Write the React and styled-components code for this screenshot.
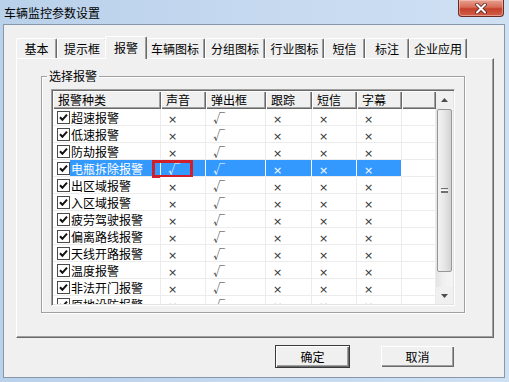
import React from 'react'
import styled, { createGlobalStyle } from 'styled-components'

const GlobalStyle = createGlobalStyle`
  html, body {
    margin: 0;
    padding: 0;
    background: #c2d6ee;
  }
  body {
    font-family: "Noto Sans CJK SC", "Liberation Sans", sans-serif;
    font-size: 12px;
    color: #000;
  }
`

const tabs = [
  { label: '基本', width: 41 },
  { label: '提示框', width: 50 },
  { label: '报警', width: 42, active: true },
  { label: '车辆图标', width: 60 },
  { label: '分组图标', width: 60 },
  { label: '行业图标', width: 59 },
  { label: '短信', width: 41 },
  { label: '标注', width: 44 },
  { label: '企业应用', width: 58 },
]

const columns = [
  { title: '报警种类', width: 108 },
  { title: '声音', width: 45, key: 'sound' },
  { title: '弹出框', width: 60, key: 'popup' },
  { title: '跟踪', width: 46, key: 'track' },
  { title: '短信', width: 45, key: 'sms' },
  { title: '字幕', width: 45, key: 'caption' },
]

const names = [
  '超速报警', '低速报警', '防劫报警', '电瓶拆除报警', '出区域报警', '入区域报警',
  '疲劳驾驶报警', '偏离路线报警', '天线开路报警', '温度报警', '非法开门报警', '原地设防报警',
]

const alarms = names.map((name, i) => ({
  name,
  sound: i === 3,
  popup: true,
  track: false,
  sms: false,
  caption: false,
  selected: i === 3,
}))

const CheckBox = () => (
  <svg width='13' height='13' viewBox='0 0 13 13'>
    <rect x='0.5' y='0.5' width='12' height='12' fill='#fff' stroke='#4a4a4a' />
    <path d='M3 6.2 L5.4 8.8 L10 3.6' fill='none' stroke='#111' strokeWidth='2' />
  </svg>
)

const CloseIcon = () => (
  <svg width='14' height='11' viewBox='0 0 14 11'>
    <path d='M3 1.5 L11 9.5 M11 1.5 L3 9.5' stroke='#5a2020' strokeWidth='3.6' strokeLinecap='round' />
    <path d='M3 1.5 L11 9.5 M11 1.5 L3 9.5' stroke='#fff' strokeWidth='2' strokeLinecap='round' />
  </svg>
)

const Arrow = ({ down }) => (
  <svg width='7' height='4' viewBox='0 0 7 4'>
    <path d={down ? 'M0 0 L7 0 L3.5 4 Z' : 'M0 4 L7 4 L3.5 0 Z'} fill='#4d4d4d' />
  </svg>
)

const App = () => {
  return (
    <Window>
      <GlobalStyle />
      <TitleBar>
        <Title>车辆监控参数设置</Title>
        <CloseButton><CloseIcon /></CloseButton>
      </TitleBar>
      <Client>
        <TabStrip>
          {tabs.map(t => (
            <Tab key={t.label} $width={t.width} $active={t.active}>{t.label}</Tab>
          ))}
        </TabStrip>
        <Panel>
          <GroupBox>
            <Legend>选择报警</Legend>
            <ListView>
              <TableArea>
                <HeaderRow>
                  {columns.map(c => (
                    <HeaderCell key={c.title} $width={c.width}>{c.title}</HeaderCell>
                  ))}
                  <HeaderCell $width={34} />
                </HeaderRow>
                {alarms.map(a => (
                  <Row key={a.name}>
                    <NameCell $width={columns[0].width} $selected={a.selected}>
                      <CheckBox />
                      <NameText $selected={a.selected}>{a.name}</NameText>
                    </NameCell>
                    {columns.slice(1).map(c => (
                      <Cell key={c.key} $width={c.width} $selected={a.selected}>
                        {a[c.key] ? <Tick>√</Tick> : <Cross>×</Cross>}
                      </Cell>
                    ))}
                    <Cell $width={34} />
                    {a.selected && <Marker />}
                  </Row>
                ))}
              </TableArea>
              <ScrollBar>
                <ScrollButton><Arrow /></ScrollButton>
                <Track>
                  <Thumb>
                    <Grip />
                  </Thumb>
                </Track>
                <ScrollButton><Arrow down /></ScrollButton>
              </ScrollBar>
            </ListView>
          </GroupBox>
        </Panel>
        <ButtonRow>
          <Button $default>确定</Button>
          <Button>取消</Button>
        </ButtonRow>
      </Client>
    </Window>
  )
}

const Window = styled.div`
  width: 509px;
  height: 382px;
  box-sizing: border-box;
  padding: 0 4px 4px 3px;
  display: flex;
  flex-direction: column;
  background: linear-gradient(to right, #b9d1ea 0%, #c4d8ef 45%, #cfe0f3 100%);
`

const TitleBar = styled.div`
  height: 24px;
  display: flex;
  align-items: flex-start;
`

const Title = styled.span`
  margin-top: 5px;
  margin-left: 1px;
  line-height: 16px;
`

const CloseButton = styled.div`
  margin-left: auto;
  margin-right: 1px;
  width: 46px;
  height: 17px;
  box-sizing: border-box;
  border: 1px solid #6b2a24;
  border-top: none;
  border-radius: 0 0 4px 4px;
  background: linear-gradient(#e6a192 0%, #d86b57 45%, #c3412c 55%, #d2604a 100%);
  box-shadow: inset 0 0 0 1px rgba(255, 210, 200, 0.5);
  display: flex;
  align-items: center;
  justify-content: center;
`

const Client = styled.div`
  flex: 1;
  background: #f0f0f0;
  border: 1px solid #8797ab;
  display: flex;
  flex-direction: column;
`

const TabStrip = styled.div`
  display: flex;
  align-items: flex-end;
  height: 22px;
  margin-top: 11px;
  padding-left: 12px;
`

const Tab = styled.div`
  position: relative;
  box-sizing: border-box;
  width: ${p => p.$width}px;
  height: ${p => (p.$active ? 23 : 20)}px;
  margin: ${p => (p.$active ? '0 -2px -1px -2px' : '0')};
  padding-top: ${p => (p.$active ? 3 : 2)}px;
  z-index: ${p => (p.$active ? 1 : 0)};
  background: #f0f0f0;
  border-top: 1px solid #fff;
  border-left: 1px solid #fff;
  border-right: 1px solid #696969;
  box-shadow: inset -1px 0 0 #a0a0a0;
  border-radius: 2px 2px 0 0;
  text-align: center;
  line-height: 16px;
`

const Panel = styled.div`
  margin-left: 12px;
  width: 478px;
  height: 280px;
  box-sizing: border-box;
  border-top: 1px solid #fff;
  border-left: 1px solid #fff;
  border-right: 1px solid #696969;
  border-bottom: 1px solid #696969;
  box-shadow: inset -1px -1px 0 #a0a0a0;
  padding: 17px 0 0 24px;
`

const GroupBox = styled.div`
  position: relative;
  width: 424px;
  height: 237px;
  box-sizing: border-box;
  border: 1px solid #a0a0a0;
  box-shadow: 1px 1px 0 #fff, inset 1px 1px 0 #fff;
  padding: 12px 0 0 9px;
`

const Legend = styled.span`
  position: absolute;
  top: -9px;
  left: 5px;
  padding: 0 2px;
  background: #f0f0f0;
  line-height: 16px;
`

const ListView = styled.div`
  width: 404px;
  height: 217px;
  box-sizing: border-box;
  border-top: 1px solid #a0a0a0;
  border-left: 1px solid #a0a0a0;
  border-right: 1px solid #fff;
  border-bottom: 1px solid #fff;
  box-shadow: inset 1px 1px 0 #696969, inset -1px -1px 0 #e3e3e3;
  padding: 1px;
  display: flex;
  background: #fff;
`

const TableArea = styled.div`
  width: 383px;
  height: 213px;
  overflow: hidden;
  background: #fff;
`

const HeaderRow = styled.div`
  display: flex;
  height: 18px;
`

const HeaderCell = styled.div`
  box-sizing: border-box;
  width: ${p => p.$width}px;
  flex: none;
  height: 18px;
  padding-left: 5px;
  line-height: 18px;
  background: #f0f0f0;
  box-shadow: inset 1px 1px 0 #fff, inset -1px -1px 0 #696969, inset -2px -2px 0 #a0a0a0;
  white-space: nowrap;
`

const Row = styled.div`
  position: relative;
  display: flex;
  height: 17px;
`

const Cell = styled.div`
  box-sizing: border-box;
  width: ${p => p.$width}px;
  flex: none;
  height: 17px;
  padding-left: 7px;
  line-height: 17px;
  border-right: 1px solid ${p => (p.$selected ? '#fff' : '#ececec')};
  border-bottom: 1px solid #ececec;
  background: ${p => (p.$selected ? '#3399ff' : '#fff')};
  color: ${p => (p.$selected ? '#fff' : '#333')};
`

const NameCell = styled.div`
  box-sizing: border-box;
  width: ${p => p.$width}px;
  flex: none;
  height: 17px;
  display: flex;
  align-items: center;
  padding: 1px 0 0 4px;
  border-right: 1px solid ${p => (p.$selected ? '#fff' : '#ececec')};
  border-bottom: 1px solid #ececec;
`

const NameText = styled.span`
  flex: 1;
  height: 16px;
  margin-top: -1px;
  line-height: 17px;
  padding-left: 1px;
  white-space: nowrap;
  background: ${p => (p.$selected ? '#3399ff' : 'transparent')};
  color: ${p => (p.$selected ? '#fff' : '#000')};
`

const Tick = styled.span`
  font-size: 12px;
`

const Cross = styled.span`
  font-family: "DejaVu Sans", sans-serif;
  font-size: 11px;
`

const Marker = styled.div`
  position: absolute;
  left: 99px;
  top: 0;
  width: 41px;
  height: 18px;
  box-sizing: border-box;
  border: 3px solid #cf1f2b;
`

const ScrollBar = styled.div`
  width: 17px;
  height: 213px;
  display: flex;
  flex-direction: column;
  background: #f0f0f0;
`

const ScrollButton = styled.div`
  height: 17px;
  display: flex;
  align-items: center;
  justify-content: center;
`

const Track = styled.div`
  flex: 1;
  padding: 1px 0 0 1px;
  background: linear-gradient(to right, #e3e3e3, #f0f0f0 40%, #f5f5f5);
`

const Thumb = styled.div`
  width: 15px;
  height: 163px;
  box-sizing: border-box;
  border: 1px solid #979797;
  border-radius: 2px;
  background: linear-gradient(to right, #f2f2f2, #e6e6e6 50%, #d2d2d2);
  display: flex;
  align-items: center;
  justify-content: center;
`

const Grip = styled.div`
  width: 7px;
  height: 5px;
  border-top: 1px solid #6f6f6f;
  border-bottom: 1px solid #6f6f6f;
  box-sizing: border-box;
  background: linear-gradient(#fff 0, #fff 1px, #6f6f6f 1px, #6f6f6f 2px, transparent 2px);
  background-position: 0 1px;
  background-repeat: no-repeat;
`

const ButtonRow = styled.div`
  display: flex;
  justify-content: flex-end;
  gap: 30px;
  margin-top: 7px;
  padding-right: 49px;
`

const Button = styled.div`
  width: 75px;
  height: 23px;
  box-sizing: border-box;
  background: #f0f0f0;
  border: 1px solid ${p => (p.$default ? '#3a3a3a' : 'transparent')};
  box-shadow: inset 1px 1px 0 #fff, inset -1px -1px 0 #696969, inset -2px -2px 0 #a0a0a0;
  text-align: center;
  line-height: 21px;
`

export default App
